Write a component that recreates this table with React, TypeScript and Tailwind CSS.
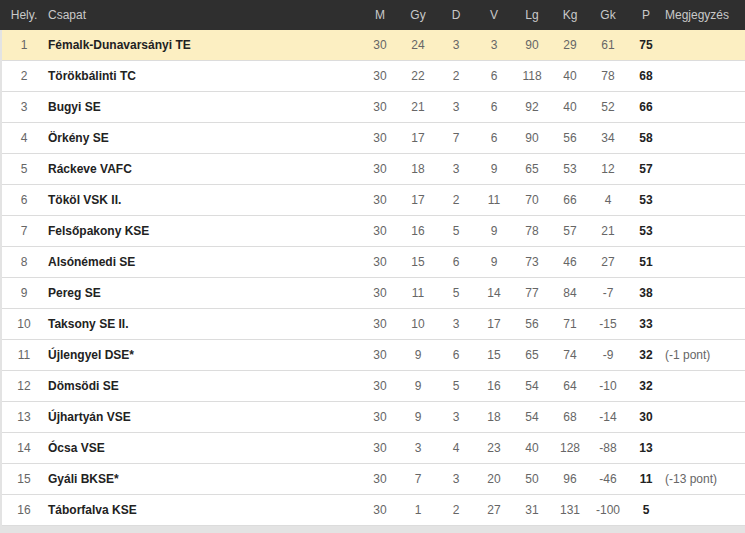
import React from "react";

type Row = {
  pos: number;
  team: string;
  m: number;
  gy: number;
  d: number;
  v: number;
  lg: number;
  kg: number;
  gk: number;
  p: number;
  note?: string;
};

const rows: Row[] = [
  { pos: 1, team: "Fémalk-Dunavarsányi TE", m: 30, gy: 24, d: 3, v: 3, lg: 90, kg: 29, gk: 61, p: 75 },
  { pos: 2, team: "Törökbálinti TC", m: 30, gy: 22, d: 2, v: 6, lg: 118, kg: 40, gk: 78, p: 68 },
  { pos: 3, team: "Bugyi SE", m: 30, gy: 21, d: 3, v: 6, lg: 92, kg: 40, gk: 52, p: 66 },
  { pos: 4, team: "Örkény SE", m: 30, gy: 17, d: 7, v: 6, lg: 90, kg: 56, gk: 34, p: 58 },
  { pos: 5, team: "Ráckeve VAFC", m: 30, gy: 18, d: 3, v: 9, lg: 65, kg: 53, gk: 12, p: 57 },
  { pos: 6, team: "Tököl VSK II.", m: 30, gy: 17, d: 2, v: 11, lg: 70, kg: 66, gk: 4, p: 53 },
  { pos: 7, team: "Felsőpakony KSE", m: 30, gy: 16, d: 5, v: 9, lg: 78, kg: 57, gk: 21, p: 53 },
  { pos: 8, team: "Alsónémedi SE", m: 30, gy: 15, d: 6, v: 9, lg: 73, kg: 46, gk: 27, p: 51 },
  { pos: 9, team: "Pereg SE", m: 30, gy: 11, d: 5, v: 14, lg: 77, kg: 84, gk: -7, p: 38 },
  { pos: 10, team: "Taksony SE II.", m: 30, gy: 10, d: 3, v: 17, lg: 56, kg: 71, gk: -15, p: 33 },
  { pos: 11, team: "Újlengyel DSE*", m: 30, gy: 9, d: 6, v: 15, lg: 65, kg: 74, gk: -9, p: 32, note: "(-1 pont)" },
  { pos: 12, team: "Dömsödi SE", m: 30, gy: 9, d: 5, v: 16, lg: 54, kg: 64, gk: -10, p: 32 },
  { pos: 13, team: "Újhartyán VSE", m: 30, gy: 9, d: 3, v: 18, lg: 54, kg: 68, gk: -14, p: 30 },
  { pos: 14, team: "Ócsa VSE", m: 30, gy: 3, d: 4, v: 23, lg: 40, kg: 128, gk: -88, p: 13 },
  { pos: 15, team: "Gyáli BKSE*", m: 30, gy: 7, d: 3, v: 20, lg: 50, kg: 96, gk: -46, p: 11, note: "(-13 pont)" },
  { pos: 16, team: "Táborfalva KSE", m: 30, gy: 1, d: 2, v: 27, lg: 31, kg: 131, gk: -100, p: 5 },
];

const font = { fontFamily: '"Liberation Sans", Arial, sans-serif' };

function Num({ children, bold }: { children: React.ReactNode; bold?: boolean }) {
  return (
    <div
      className={
        "w-[38px] shrink-0 text-center " +
        (bold ? "font-bold text-[#222]" : "text-[#666]")
      }
    >
      {children}
    </div>
  );
}

const headCell = "w-[38px] shrink-0 text-center";

export default function App() {
  return (
    <div className="w-[745px] h-[533px] bg-[#e3e3e3] overflow-hidden text-[12px]" style={font}>
      <div className="flex items-center h-[30px] bg-[#2f2f2f] text-[#c9c9c9] pl-[2px]">
        <div className="w-[44px] shrink-0 text-center">Hely.</div>
        <div className="w-[315px] shrink-0 pl-[2px]">Csapat</div>
        <div className={headCell}>M</div>
        <div className={headCell}>Gy</div>
        <div className={headCell}>D</div>
        <div className={headCell}>V</div>
        <div className={headCell}>Lg</div>
        <div className={headCell}>Kg</div>
        <div className={headCell}>Gk</div>
        <div className={headCell}>P</div>
        <div className="flex-1 whitespace-nowrap">Megjegyzés</div>
      </div>
      <div className="ml-[2px] bg-white">
        {rows.map((r) => (
          <div
            key={r.pos}
            className={
              "flex items-center h-[31px] border-b border-[#dcdcdc] " +
              (r.pos === 1 ? "bg-[#fcefc2]" : "bg-white")
            }
          >
            <div className="w-[44px] shrink-0 text-center text-[#666]">{r.pos}</div>
            <div className="w-[315px] shrink-0 pl-[2px] font-bold text-[#222] whitespace-nowrap">
              {r.team}
            </div>
            <Num>{r.m}</Num>
            <Num>{r.gy}</Num>
            <Num>{r.d}</Num>
            <Num>{r.v}</Num>
            <Num>{r.lg}</Num>
            <Num>{r.kg}</Num>
            <Num>{r.gk}</Num>
            <Num bold>{r.p}</Num>
            <div className="flex-1 whitespace-nowrap text-[#666]">{r.note ?? ""}</div>
          </div>
        ))}
      </div>
    </div>
  );
}
